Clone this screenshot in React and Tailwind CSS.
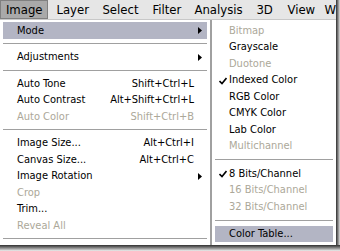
import React from "react";

const font = { fontFamily: '"DejaVu Sans Condensed", "DejaVu Sans", Verdana, sans-serif', fontStretch: "condensed" };

function Arrow() {
  return (
    <svg width="4" height="7" viewBox="0 0 4 7" className="absolute right-[5px] top-[5px]">
      <path d="M0 0 L4 3.5 L0 7 Z" fill="#000" />
    </svg>
  );
}

function Check() {
  return (
    <svg width="8" height="8" viewBox="0 0 8 8" className="absolute left-[4px] top-[5px]">
      <path d="M0.5 4 L3 6.5 L7.5 1" stroke="#000" strokeWidth="1.6" fill="none" />
    </svg>
  );
}

function Item({ label, shortcut, disabled, hi, arrow, check, pl = "pl-[14px]" }) {
  return (
    <div
      className={`relative h-[16.5px] flex items-center ${pl} pr-[13px] text-[11px] leading-none ${
        hi ? "bg-[#b3b5c4]" : ""
      } ${disabled ? "text-[#aca899]" : "text-black"}`}
    >
      {check && <Check />}
      <span className="flex-1 whitespace-nowrap">{label}</span>
      {shortcut && <span className="whitespace-nowrap">{shortcut}</span>}
      {arrow && <Arrow />}
    </div>
  );
}

function Sep({ h = "h-[10px]" }) {
  return (
    <div className={`${h} flex items-center`}>
      <div className="w-full h-px bg-[#a0a0a0]" />
    </div>
  );
}

export default function App() {
  return (
    <div className="w-[340px] h-[251px] bg-white overflow-hidden flex flex-col" style={font}>
      <div className="flex h-[245px]">
        <div className="w-[336px] flex flex-col">
          {/* menubar */}
          <div className="h-[20px] bg-[#e6e6e6] flex items-stretch text-[13px] text-black border-b border-[#c8c8c8]">
            <div className="w-[49px] bg-[#a9a9a9] border border-[#808080] flex items-center justify-center">Image</div>
            <div className="flex items-center pl-[8px] gap-0">
              <span className="w-[46px]">Layer</span>
              <span className="w-[50px]">Select</span>
              <span className="w-[42px]">Filter</span>
              <span className="w-[62px]">Analysis</span>
              <span className="w-[31px]">3D</span>
              <span className="w-[37px]">View</span>
              <span>W</span>
            </div>
          </div>
          <div className="flex flex-1">
            {/* main menu */}
            <div className="w-[211px] border-r border-[#a0a0a0] pt-[2px] px-[3px] flex flex-col">
              <Item label="Mode" hi arrow />
              <Sep />
              <Item label="Adjustments" arrow />
              <Sep />
              <Item label="Auto Tone" shortcut="Shift+Ctrl+L" />
              <Item label="Auto Contrast" shortcut="Alt+Shift+Ctrl+L" />
              <Item label="Auto Color" shortcut="Shift+Ctrl+B" disabled />
              <Sep />
              <Item label="Image Size..." shortcut="Alt+Ctrl+I" />
              <Item label="Canvas Size..." shortcut="Alt+Ctrl+C" />
              <Item label="Image Rotation" arrow />
              <Item label="Crop" disabled />
              <Item label="Trim..." />
              <Item label="Reveal All" disabled />
              <Sep />
            </div>
            {/* submenu */}
            <div className="flex-1 border-l border-[#a0a0a0] pt-[2px] px-[3px] flex flex-col">
              <Item label="Bitmap" disabled />
              <Item label="Grayscale" />
              <Item label="Duotone" disabled />
              <Item label="Indexed Color" check />
              <Item label="RGB Color" />
              <Item label="CMYK Color" />
              <Item label="Lab Color" />
              <Item label="Multichannel" disabled />
              <Sep h="h-[11px]" />
              <Item label="8 Bits/Channel" check />
              <Item label="16 Bits/Channel" disabled />
              <Item label="32 Bits/Channel" disabled />
              <Sep h="h-[11px]" />
              <Item label="Color Table..." hi />
            </div>
          </div>
        </div>
        <div className="w-[4px] bg-gradient-to-r from-[#303030] to-[#e0e0e0]" />
      </div>
      <div className="h-[6px] bg-gradient-to-b from-[#303030] to-[#f0f0f0]" />
    </div>
  );
}
